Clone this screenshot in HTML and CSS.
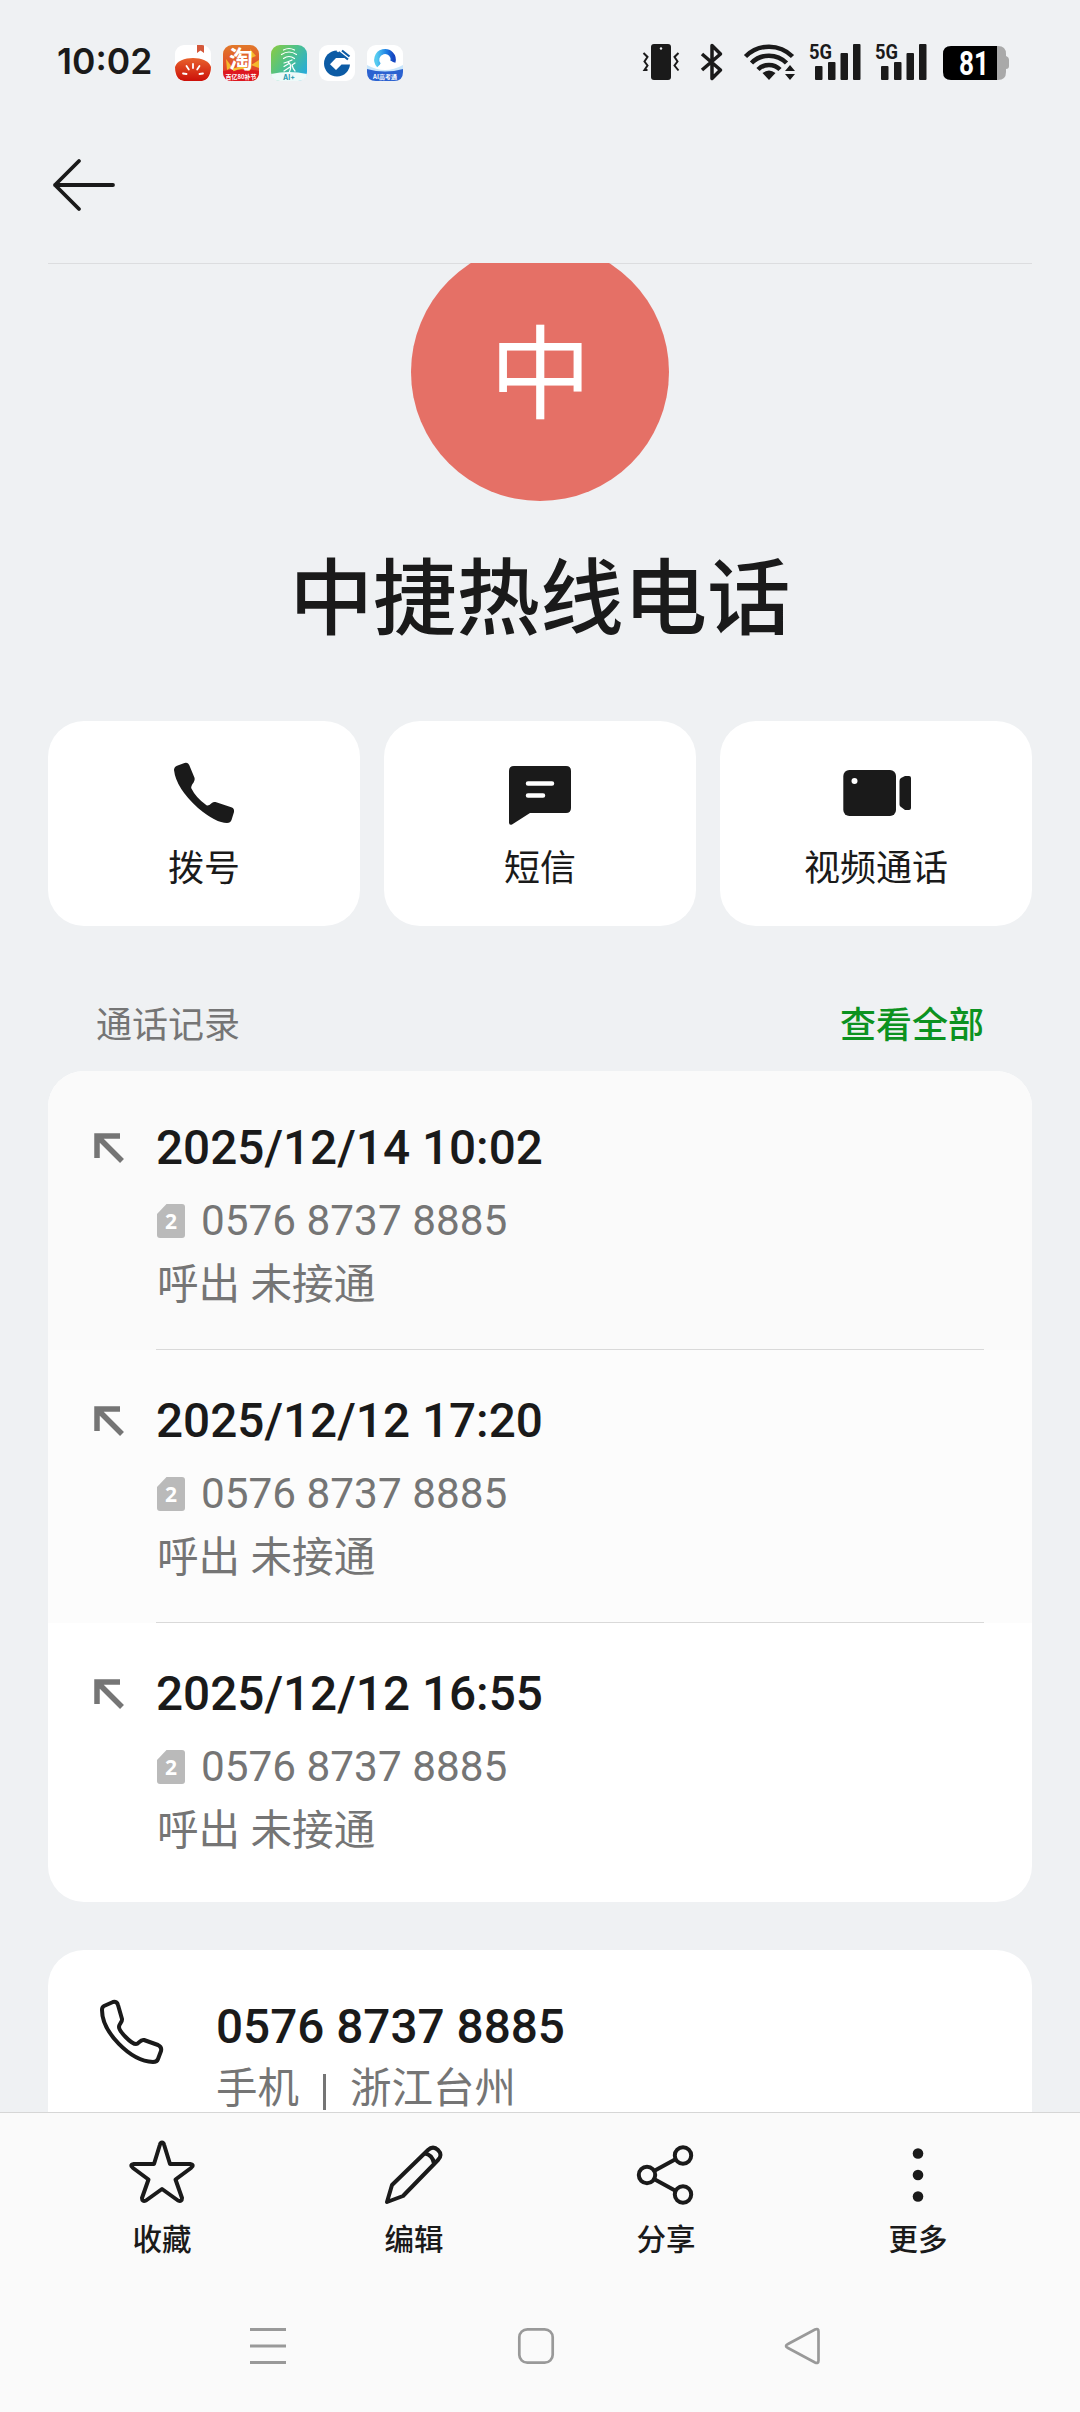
FILE: index.html
```html
<!DOCTYPE html>
<html lang="zh-CN">
<head>
<meta charset="utf-8">
<title>中捷热线电话</title>
<link rel="stylesheet" href="styles.css">
</head>
<body>
<div class="screen">
  <header class="status">
    <span class="clock">10:02</span>
    <div class="apps">
      <svg viewBox="0 0 36 36"><defs><clipPath id="r"><rect width="36" height="36" rx="9"/></clipPath><linearGradient id="g1" x1="0" y1="0" x2="0" y2="1"><stop offset="0" stop-color="#e8622c"/><stop offset="1" stop-color="#cc1009"/></linearGradient></defs><g clip-path="url(#r)"><rect width="36" height="36" fill="#fff"/><path d="M22 0h7v8l-3.500-2.500L22 8z" fill="#d4583a"/><path d="M0 22C3 10 33 10 36 22c0 9-5 14-9 14H9c-5 0-9-5-9-14z" fill="url(#g1)"/><path d="M18 19v4M11.500 21l2.300 3.500M24.500 21l-2.300 3.500M8 28.500l3.500.5M28 28.500l-3.500.5" stroke="#fff" stroke-width="1.800" stroke-linecap="round"/></g></svg>
      <svg viewBox="0 0 36 36"><defs><linearGradient id="g2" x1="0" y1="0" x2="0" y2="1"><stop offset="0" stop-color="#e2792a"/><stop offset=".7" stop-color="#e0442a"/></linearGradient></defs><rect width="36" height="36" rx="9" fill="url(#g2)"/><path d="M27 4l6 7-5 2zM3 14l6 8-5 3zM28 20l8-5v8z" fill="#f4b92c"/><path d="M0 26q18-4 36 0v1q0 9-9 9H9q-9 0-9-9z" fill="#dd1820"/><path d="M10 25q9-4 17 0" stroke="#f6c23b" stroke-width="2.500" fill="none"/><text x="18" y="23" class="ico-tao">淘</text><text x="18" y="33.500" class="ico-sub">百亿80补节</text></svg>
      <svg viewBox="0 0 36 36"><defs><linearGradient id="g3" x1="0" y1="0" x2="1" y2=".7"><stop offset="0" stop-color="#8ccb3e"/><stop offset=".5" stop-color="#4fc28a"/><stop offset="1" stop-color="#28acd8"/></linearGradient></defs><rect width="36" height="36" rx="9" fill="url(#g3)"/><g fill="none" stroke="#fff" stroke-width="1.200" stroke-linecap="round"><path d="M12.500 5q5.500-3 11 0M10.500 9.500q7.500-5 15 0M12.500 13.500q5.500-4 11 0M13 18q4-1 8-3M17 17q5 3 1 11M13 21.500l5-3M13 26l6-4M24 18l-3 2M21 20q1 4 3 6"/></g><path d="M0 29q18-4 36 0-1 7-9 7H9q-8 0-9-7z" fill="#eefaf9"/><text x="18" y="34.500" class="ico-ai">AI+</text></svg>
      <svg viewBox="0 0 36 36"><rect width="36" height="36" rx="9" fill="#fff"/><circle cx="18" cy="18.500" r="13" fill="#0c5ba5"/><path d="M11 19.300 17 13h19v6.500H22.500L17 25z" fill="#fff"/><path d="M19 4l14 11" stroke="#fff" stroke-width="5"/><path d="M19.500 7 29 14.500M23 5.500l7.500 6" stroke="#0c5ba5" stroke-width="2.200"/></svg>
      <svg viewBox="0 0 36 36"><defs><linearGradient id="g5" x1="0" y1="0" x2="1" y2="0"><stop offset="0" stop-color="#55cbf0"/><stop offset=".6" stop-color="#1c7de4"/><stop offset="1" stop-color="#1646c0"/></linearGradient></defs><g clip-path="url(#r)"><rect width="36" height="36" fill="#fff"/><path d="M0 20q18 10 36 0v16H0z" fill="#c9e6fb"/><path d="M12 20.500A8.300 8.300 0 1 1 26 17" fill="none" stroke="url(#g5)" stroke-width="5"/><path d="M13 21q0-4 4-4 2-4 6-1 4 0 4 5z" fill="#fff"/></g><path d="M0 24q18 5 36 0v3q0 9-9 9H9q-9 0-9-9z" fill="#2c62d0"/><text x="18" y="33.500" class="ico-sub">AI高考通</text></svg>
    </div>
    <svg class="sysicons" viewBox="0 0 400 44">
      <g transform="translate(-640 -40)" fill="#1a1a1a">
        <rect x="651" y="44" width="20" height="36" rx="3"/><circle cx="661" cy="48.500" r="1.200" fill="#eff1f3"/>
        <path d="M643.500 53l4 4-3 4.500 3 4-3 4.500 3 0M678.500 53l-4 4 3 4.500-3 4 4 5" fill="none" stroke="#1a1a1a" stroke-width="2"/>
        <path d="M702 54l18.500 16-8.500 8.500v-33l8.500 8.500-18.500 16" fill="none" stroke="#1a1a1a" stroke-width="3.500" stroke-linejoin="round"/>
        <g fill="none" stroke="#1a1a1a" stroke-width="4.500"><path d="M745.500 56.500a33 33 0 0 1 47 0"/><path d="M751.500 63a24.500 24.500 0 0 1 35 0"/><path d="M758 69.500a15.500 15.500 0 0 1 22 0"/></g>
        <path d="M769 80l-6.500-7q6.500-5 13 0zM790 65l5 6h-10zM790 80l5-6h-10z"/>
        <g id="sig"><rect x="815" y="66" width="7.500" height="14" rx="1"/><rect x="828" y="62" width="7.500" height="18" rx="1"/><rect x="840.500" y="53" width="7.500" height="27" rx="1"/><rect x="853" y="44" width="7.500" height="36" rx="1"/><text x="809" y="58.500" class="net" textLength="23" lengthAdjust="spacingAndGlyphs">5G</text></g>
        <use href="#sig" x="66"/>
        <path d="M997 46h1q8 0 8 8v2q3 1 3 4v6q0 3-3 3v3q0 8-8 8h-1z" fill="#a9a9a9"/>
        <path d="M951 46h46v34h-46q-8 0-8-8V54q0-8 8-8z" fill="#000"/>
        <text x="974" y="74.500" class="batt" textLength="30" lengthAdjust="spacingAndGlyphs">81</text>
      </g>
    </svg>
  </header>

  <nav class="topbar">
    <svg class="back" viewBox="0 0 64 54"><path d="M28 3 4 27l24 24M4 27h58" fill="none" stroke="#1a1a1a" stroke-width="3.800" stroke-linecap="round" stroke-linejoin="round"/></svg>
  </nav>

  <main class="content">
    <section class="profile">
      <div class="avatar-clip"><div class="avatar">中</div></div>
      <h1 class="name">中捷热线电话</h1>
    </section>

    <section class="actions">
      <div class="action">
        <svg viewBox="0 0 72 72"><path fill="#1a1a1a" d="M6 13q0-3 3-4.300L16.500 6q3.500-.7 4.700 2L26.600 21q.5 2-1 4.500-3 4-2.300 5.800Q28 41 38.500 48.300q2 1 5-2 2-1.800 4-1.300l16.500 5.500q2.500 1 2 4.500l-2.500 8q-1 3-4.500 3Q48 66 30 51 8 31 6 13z"/></svg>
        <span>拨号</span>
      </div>
      <div class="action">
        <svg viewBox="0 0 72 72"><path fill="#1a1a1a" d="M10 9h52q5 0 5 5v37q0 5-5 5H26L8 67.500q-3 1-3-2V14q0-5 5-5z"/><path d="M24 26.500h24M24 38.500h15" stroke="#fff" stroke-width="4.500" stroke-linecap="round"/></svg>
        <span>短信</span>
      </div>
      <div class="action">
        <svg viewBox="0 0 72 72"><rect x="3.300" y="13" width="52.700" height="46" rx="6" fill="#1a1a1a"/><circle cx="14.500" cy="24" r="3" fill="#fff"/><path fill="#1a1a1a" d="M59.500 24q0-2 1.500-3l4-2h4q2 0 2 2v30q0 2-2 2h-4l-4-3q-1.500-1-1.500-2.500z"/></svg>
        <span>视频通话</span>
      </div>
    </section>

    <div class="section-head"><span>通话记录</span><a class="all">查看全部</a></div>

    <section class="log">
      <article class="call call-first">
        <svg class="dir" viewBox="0 0 30 30"><path d="M26 3H3v22M4 4l24 24" fill="none" stroke="#757575" stroke-width="5.500"/></svg>
        <div class="info">
          <div class="date">2025/12/14 10:02</div>
          <div class="number"><svg class="sim" viewBox="0 0 28 34"><path fill="#bababa" d="M9.500 0H25q3 0 3 3v28q0 3-3 3H3q-3 0-3-3V10z"/><text x="14" y="25">2</text></svg>0576 8737 8885</div>
          <div class="state">呼出 未接通</div>
        </div>
      </article>
      <article class="call call-second">
        <svg class="dir" viewBox="0 0 30 30"><path d="M26 3H3v22M4 4l24 24" fill="none" stroke="#757575" stroke-width="5.500"/></svg>
        <div class="info">
          <div class="date">2025/12/12 17:20</div>
          <div class="number"><svg class="sim" viewBox="0 0 28 34"><path fill="#bababa" d="M9.500 0H25q3 0 3 3v28q0 3-3 3H3q-3 0-3-3V10z"/><text x="14" y="25">2</text></svg>0576 8737 8885</div>
          <div class="state">呼出 未接通</div>
        </div>
      </article>
      <article class="call call-last">
        <svg class="dir" viewBox="0 0 30 30"><path d="M26 3H3v22M4 4l24 24" fill="none" stroke="#757575" stroke-width="5.500"/></svg>
        <div class="info">
          <div class="date">2025/12/12 16:55</div>
          <div class="number"><svg class="sim" viewBox="0 0 28 34"><path fill="#bababa" d="M9.500 0H25q3 0 3 3v28q0 3-3 3H3q-3 0-3-3V10z"/><text x="14" y="25">2</text></svg>0576 8737 8885</div>
          <div class="state">呼出 未接通</div>
        </div>
      </article>
    </section>

    <section class="contact">
      <svg class="handset" viewBox="0 0 64 64"><path d="M4 6 13 2q4-1 5 3l4 14c.5 3-3 5-3 8 0 4 12 17 17 17 3 0 4-5 8-4l14 5q4 2 3 6l-3 8q-1 3-5 3C30 61 2 32 2 10q0-3 2-4z" fill="none" stroke="#1a1a1a" stroke-width="4" stroke-linejoin="round"/></svg>
      <div class="phone-info">
        <div class="date">0576 8737 8885</div>
        <div class="place"><span>手机</span><i class="bar"></i><span>浙江台州</span></div>
      </div>
    </section>
  </main>

  <footer class="bottom">
    <div class="tools">
      <div class="tool"><svg viewBox="0 0 72 72"><path d="M36 6.500q1.500 0 2 2L44 28h20q5 1 1 4L49.500 43.500 56 62q0 4-4 2.500L36 53 20 64.500q-4 1.500-4-2.500l6.500-18.500L7 32q-4-3 1-4h20l6-19.500q.5-2 2-2z" fill="none" stroke="#1a1a1a" stroke-width="4" stroke-linejoin="round"/></svg><span>收藏</span></div>
      <div class="tool"><svg viewBox="0 0 72 72"><path d="M9 66l5-17 36-35q5-5 10 0t0 10L25 60zM46.500 17.500q8 1 9.500 10" fill="none" stroke="#1a1a1a" stroke-width="4" stroke-linejoin="round"/></svg><span>编辑</span></div>
      <div class="tool"><svg viewBox="0 0 72 72"><g fill="none" stroke="#1a1a1a" stroke-width="4"><circle cx="17" cy="39" r="8.200"/><circle cx="53" cy="19.500" r="8.200"/><circle cx="53" cy="58.500" r="8.200"/><path d="M24 35l21-11.500M24 43l21 11.500"/></g></svg><span>分享</span></div>
      <div class="tool"><svg viewBox="0 0 72 72"><g fill="#1a1a1a"><circle cx="36" cy="17.500" r="5.300"/><circle cx="36" cy="39" r="5.300"/><circle cx="36" cy="60.500" r="5.300"/></g></svg><span>更多</span></div>
    </div>
    <div class="sysnav">
      <svg viewBox="0 0 40 40"><path d="M2 3.500h36M2 20h36M2 36.500h36" stroke="#999" stroke-width="3"/></svg>
      <svg viewBox="0 0 40 40"><rect x="3.300" y="3.300" width="33.400" height="33.400" rx="8" fill="none" stroke="#999" stroke-width="2.700"/></svg>
      <svg viewBox="0 0 40 40"><path d="M31 3.500q3.500-1.500 3.500 2v29q0 3.500-3.500 2L4 22q-4-2 0-4z" fill="none" stroke="#999" stroke-width="2.700"/></svg>
    </div>
  </footer>
</div>
</body>
</html>
```
FILE: styles.css
```css
* { box-sizing: border-box; }
body { margin: 0; background: #eff1f3; color: #1a1a1a; font-family: Roboto, "Noto Sans CJK SC", sans-serif; }
svg { display: block; flex: none; overflow: visible; }
.screen { width: 1080px; height: 2412px; display: flex; flex-direction: column; overflow: hidden; }

.status { height: 124px; flex: none; display: flex; align-items: center; padding-left: 57px; }
.clock { width: 118px; font: 600 35.500px/44px Inter, sans-serif; }
.apps { display: flex; gap: 12px; padding-top: 2px; }
.apps svg { width: 36px; height: 36px; }
.sysicons { width: 400px; height: 44px; margin-left: 237px; }
.net { font: 700 21px Roboto, sans-serif; }
.batt { font: 700 33px Roboto, sans-serif; fill: #fff; text-anchor: middle; }
.ico-tao { font: 700 24px "Noto Sans CJK SC", sans-serif; fill: #fff; text-anchor: middle; }
.ico-sub { font: 700 6px "Noto Sans CJK SC", sans-serif; fill: #fff; text-anchor: middle; }
.ico-ai { font: 700 7px Inter, sans-serif; fill: #2a9ab0; text-anchor: middle; }

.topbar { height: 140px; flex: none; margin: 0 48px; padding: 34px 0 0 3px; border-bottom: 1px solid #dcdddf; }
.back { width: 64px; height: 54px; }

.content { flex: 1; min-height: 0; overflow: hidden; padding: 0 48px; margin-top: -1px; }
.profile { display: flex; flex-direction: column; align-items: center; }
.avatar-clip { height: 238px; overflow: hidden; display: flex; align-items: flex-end; }
.avatar { width: 258px; height: 258px; padding: 4px 0 0 1px; border-radius: 50%; background: #e57066; color: #fff; font-size: 102px; line-height: 258px; text-align: center; }
.name { margin: 39px 0 0; font-size: 83.500px; line-height: 120px; font-weight: 500; }

.actions { display: grid; grid-template-columns: repeat(3, 1fr); gap: 24px; margin-top: 61px; }
.action { height: 205px; border-radius: 36px; background: #fff; display: flex; flex-direction: column; align-items: center; padding-top: 36px; font-size: 36px; line-height: 44px; }
.action svg { width: 72px; height: 72px; margin-bottom: 18px; }

.section-head { display: flex; justify-content: space-between; padding: 0 48px; height: 145px; align-items: flex-end; padding-bottom: 19px; font-size: 36px; line-height: 52px; color: #757575; }
.all { color: #0c9220; font-weight: 500; }

.log { background: #fff; border-radius: 36px; overflow: hidden; }
.call { display: flex; height: 273px; padding: 54px 0 0 45px; }
.call-first { height: 279px; padding-top: 60px; background: #fafafa; }
.call-second { background: #fcfcfc; }
.call-last { height: 279px; }
.dir { width: 30px; height: 30px; margin: 2px 0 0 1px; }
.info { flex: 1; margin: 0 48px 0 32px; }
.call:not(:last-child) .info { border-bottom: 1px solid #d9d9d9; }
.date { font-size: 47.700px; line-height: 56px; font-weight: 500; }
.call .date { margin-top: -11px; }
.number { display: flex; align-items: center; font-size: 42.300px; line-height: 50px; margin-top: 20px; color: #757575; }
.sim { width: 28px; height: 34px; margin: 0 16px 0 1px; }
.sim text { font: 700 21px "Open Sans", sans-serif; fill: #fff; text-anchor: middle; }
.state { font-size: 41.600px; line-height: 60px; margin: 9px 0 0 1px; color: #757575; }

.contact { margin-top: 48px; height: 400px; border-radius: 36px; background: #fff; display: flex; padding: 49px 52px; }
.handset { width: 64px; height: 64px; margin-top: 1px; }
.phone-info { margin-left: 52px; }
.place { display: flex; align-items: center; font-size: 41.500px; line-height: 60px; margin-top: 4px; color: #757575; }
.bar { width: 3px; height: 36px; margin: 5px 24px 0; background: #757575; }

.bottom { height: 300px; flex: none; background: #fafafa; border-top: 1px solid #d6d6d6; }
.tools { display: grid; grid-template-columns: repeat(4, 1fr); padding: 23px 36px 0; }
.tool { display: flex; flex-direction: column; align-items: center; font-size: 29.500px; line-height: 40px; font-weight: 500; }
.tool svg { width: 72px; height: 72px; margin-bottom: 12px; }
.sysnav { display: flex; gap: 228px; padding: 66px 0 0 248px; }
.sysnav svg { width: 40px; height: 40px; }
```
